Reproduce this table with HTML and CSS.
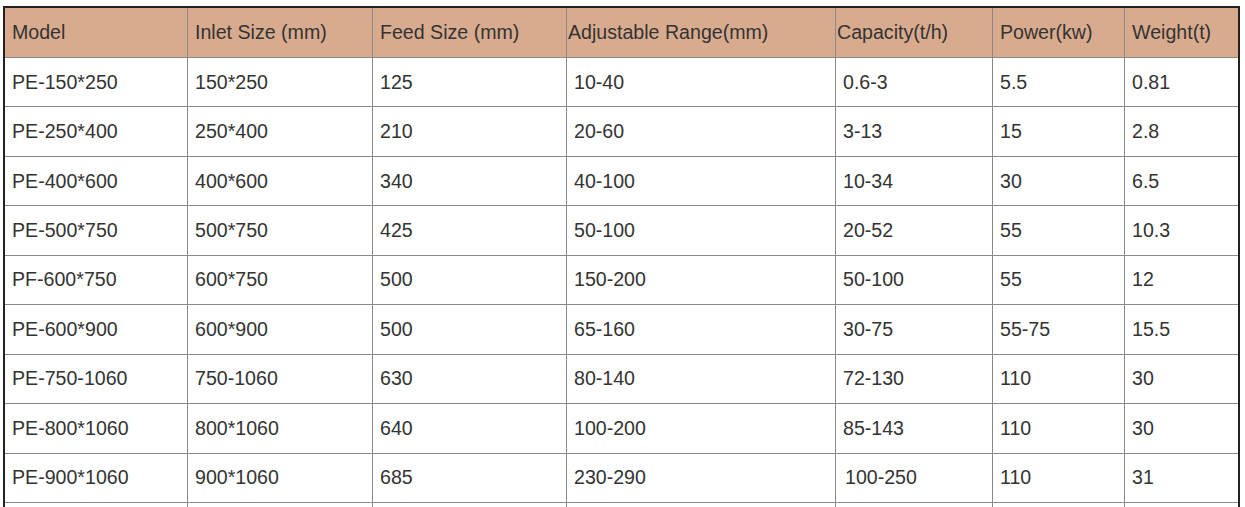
FILE: index.html
```html
<!DOCTYPE html>
<html>
<head>
<meta charset="utf-8">
<link rel="stylesheet" href="styles.css">
</head>
<body>
<table class="spec">
  <colgroup>
    <col class="c1"><col class="c2"><col class="c3"><col class="c4"><col class="c5"><col class="c6"><col class="c7">
  </colgroup>
  <thead>
    <tr>
      <th>Model</th>
      <th>Inlet Size (mm)</th>
      <th>Feed Size (mm)</th>
      <th class="tight">Adjustable Range(mm)</th>
      <th class="tight">Capacity(t/h)</th>
      <th>Power(kw)</th>
      <th>Weight(t)</th>
    </tr>
  </thead>
  <tbody>
    <tr><td>PE-150*250</td><td>150*250</td><td>125</td><td>10-40</td><td>0.6-3</td><td>5.5</td><td>0.81</td></tr>
    <tr><td>PE-250*400</td><td>250*400</td><td>210</td><td>20-60</td><td>3-13</td><td>15</td><td>2.8</td></tr>
    <tr><td>PE-400*600</td><td>400*600</td><td>340</td><td>40-100</td><td>10-34</td><td>30</td><td>6.5</td></tr>
    <tr><td>PE-500*750</td><td>500*750</td><td>425</td><td>50-100</td><td>20-52</td><td>55</td><td>10.3</td></tr>
    <tr><td>PF-600*750</td><td>600*750</td><td>500</td><td>150-200</td><td>50-100</td><td>55</td><td>12</td></tr>
    <tr><td>PE-600*900</td><td>600*900</td><td>500</td><td>65-160</td><td>30-75</td><td>55-75</td><td>15.5</td></tr>
    <tr><td>PE-750-1060</td><td>750-1060</td><td>630</td><td>80-140</td><td>72-130</td><td>110</td><td>30</td></tr>
    <tr><td>PE-800*1060</td><td>800*1060</td><td>640</td><td>100-200</td><td>85-143</td><td>110</td><td>30</td></tr>
    <tr><td>PE-900*1060</td><td>900*1060</td><td>685</td><td>230-290</td><td class="nudge">100-250</td><td>110</td><td>31</td></tr>
    <tr><td></td><td></td><td></td><td></td><td></td><td></td><td></td></tr>
  </tbody>
</table>
</body>
</html>
```

FILE: styles.css
```css
html, body {
  margin: 0;
  padding: 0;
  background: #ffffff;
  overflow: hidden;
  height: 507px;
}

.spec {
  margin: 6px 0 0 3px;
  width: 1237px;
  table-layout: fixed;
  border-collapse: separate;
  border-spacing: 0;
  border: 2px solid #222222;
  border-bottom: none;
  font-family: "Liberation Sans", Arial, sans-serif;
  font-size: 19.6px;
  color: #333333;
}

.c1 { width: 183px; }
.c2 { width: 185px; }
.c3 { width: 194px; }
.c4 { width: 269px; }
.c5 { width: 157px; }
.c6 { width: 132px; }
.c7 { width: 113px; }

.spec th,
.spec td {
  padding: 0 0 0 7px;
  height: 49.44px;
  box-sizing: border-box;
  text-align: left;
  vertical-align: middle;
  font-weight: normal;
  white-space: nowrap;
  border-right: 1px solid #8a8a8a;
  border-bottom: 1px solid #8a8a8a;
}

.spec th:last-child,
.spec td:last-child {
  border-right: none;
}

.spec thead th {
  background: #d9ab8e;
  height: 50px;
}

.spec th.tight {
  padding-left: 1px;
}

.spec td.nudge {
  padding-left: 9px;
}
```
